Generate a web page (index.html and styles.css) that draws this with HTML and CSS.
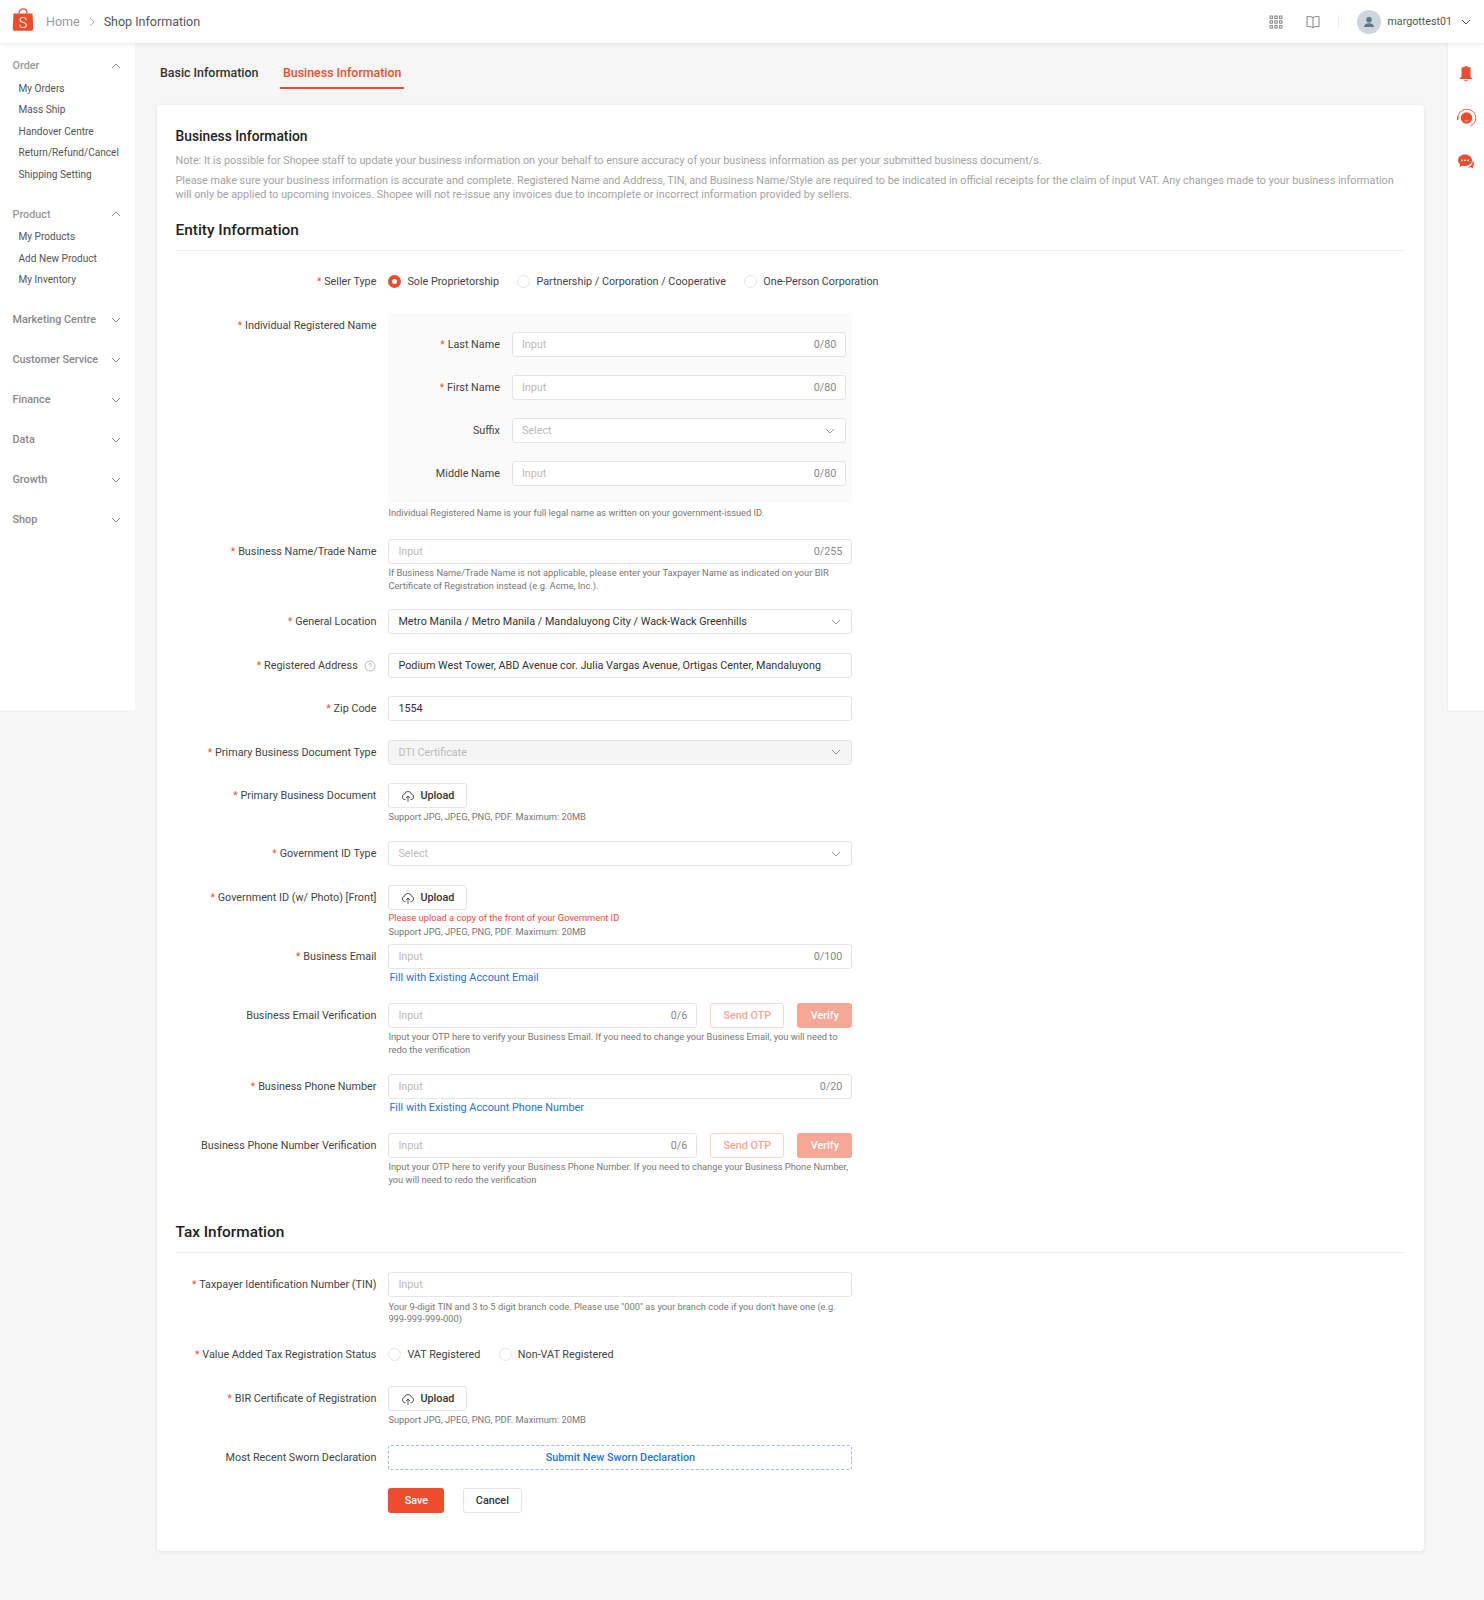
FILE: index.html
```html
<!DOCTYPE html>
<html lang="en">
<head>
<meta charset="utf-8">
<title>Shop Information</title>
<link rel="stylesheet" href="styles.css">
</head>
<body>
<svg class="defs" width="0" height="0" aria-hidden="true">
  <symbol id="down" viewBox="0 0 12 12"><path d="M2 4l4 4 4-4" fill="none" stroke="currentColor" stroke-width="1"/></symbol>
  <symbol id="up" viewBox="0 0 12 12"><path d="M2 8l4-4 4 4" fill="none" stroke="currentColor" stroke-width="1"/></symbol>
  <symbol id="cloud" viewBox="0 0 14 14"><path d="M4.600 10.600H3.800A2.700 2.700 0 0 1 3.400 5.300 3.700 3.700 0 0 1 10.600 5.300 2.700 2.700 0 0 1 10.200 10.600H9.400" fill="none" stroke="currentColor" stroke-width="1"/><path d="M7 12.800V7M5 9l2-2 2 2" fill="none" stroke="currentColor" stroke-width="1"/></symbol>
</svg>

<header class="topbar">
  <svg class="logo" viewBox="0 0 22 24"><path d="M1.500 5.500h19l.8 15.500a1.800 1.800 0 0 1-1.800 1.800H2.500A1.800 1.800 0 0 1 .7 21z" fill="#ee4d2d"/><path d="M7 5.500C7-.6 15-.6 15 5.500" fill="none" stroke="#ee4d2d" stroke-width="1.300"/><text x="11" y="19.500" text-anchor="middle" class="logo-s">S</text></svg>
  <nav class="crumbs">
    <span class="crumb-home">Home</span>
    <svg class="crumb-sep" viewBox="0 0 12 12"><path d="M4 2l4 4-4 4" fill="none" stroke="currentColor"/></svg>
    <span class="crumb-cur">Shop Information</span>
  </nav>
  <div class="top-right">
    <svg class="top-icon" viewBox="0 0 14 14"><g fill="none" stroke="#777" stroke-width=".9"><rect x="1" y="1" width="2.400" height="2.400"/><rect x="5.800" y="1" width="2.400" height="2.400"/><rect x="10.600" y="1" width="2.400" height="2.400"/><rect x="1" y="5.800" width="2.400" height="2.400"/><rect x="5.800" y="5.800" width="2.400" height="2.400"/><rect x="10.600" y="5.800" width="2.400" height="2.400"/><rect x="1" y="10.600" width="2.400" height="2.400"/><rect x="5.800" y="10.600" width="2.400" height="2.400"/><rect x="10.600" y="10.600" width="2.400" height="2.400"/></g></svg>
    <svg class="top-icon book" viewBox="0 0 14 14"><path d="M7 2.500C5.500 1.500 3 1.500 1 1.500V11.500C3 11.500 5.500 11.500 7 12.500 8.500 11.500 11 11.500 13 11.500V1.500C11 1.500 8.500 1.500 7 2.500zM7 2.500V12.500" fill="none" stroke="#777" stroke-width=".9"/></svg>
    <span class="top-sep"></span>
    <svg class="avatar" viewBox="0 0 24 24"><circle cx="12" cy="12" r="12" fill="#ccd6dc"/><circle cx="12" cy="9.800" r="2.800" fill="#5c7a8c"/><path d="M7 17c0-5 10-5 10 0z" fill="#5c7a8c"/></svg>
    <span class="username">margottest01</span>
    <svg class="chev user-chev"><use href="#down"/></svg>
  </div>
</header>

<div class="shell">
  <aside class="sidebar">
    <div class="side-group">
      <div class="side-head"><span>Order</span><svg class="chev"><use href="#up"/></svg></div>
      <a class="side-item">My Orders</a>
      <a class="side-item">Mass Ship</a>
      <a class="side-item">Handover Centre</a>
      <a class="side-item">Return/Refund/Cancel</a>
      <a class="side-item">Shipping Setting</a>
    </div>
    <div class="side-group">
      <div class="side-head"><span>Product</span><svg class="chev"><use href="#up"/></svg></div>
      <a class="side-item">My Products</a>
      <a class="side-item">Add New Product</a>
      <a class="side-item">My Inventory</a>
    </div>
    <div class="side-closed">
      <div class="side-head"><span>Marketing Centre</span><svg class="chev"><use href="#down"/></svg></div>
      <div class="side-head"><span>Customer Service</span><svg class="chev"><use href="#down"/></svg></div>
      <div class="side-head"><span>Finance</span><svg class="chev"><use href="#down"/></svg></div>
      <div class="side-head"><span>Data</span><svg class="chev"><use href="#down"/></svg></div>
      <div class="side-head"><span>Growth</span><svg class="chev"><use href="#down"/></svg></div>
      <div class="side-head"><span>Shop</span><svg class="chev"><use href="#down"/></svg></div>
    </div>
  </aside>

  <main class="main">
    <div class="tabs">
      <a class="tab">Basic Information</a>
      <a class="tab tab-active">Business Information</a>
    </div>

    <section class="card">
      <h2 class="card-title">Business Information</h2>
      <p class="note note-first">Note: It is possible for Shopee staff to update your business information on your behalf to ensure accuracy of your business information as per your submitted business document/s.</p>
      <p class="note note-second">Please make sure your business information is accurate and complete. Registered Name and Address, TIN, and Business Name/Style are required to be indicated in official receipts for the claim of input VAT. Any changes made to your business information will only be applied to upcoming invoices. Shopee will not re-issue any invoices due to incomplete or incorrect information provided by sellers.</p>

      <h3 class="section-title">Entity Information</h3>

      <div class="row mb-19">
        <div class="label req">Seller Type</div>
        <div class="radios">
          <span class="radio radio-on">Sole Proprietorship</span>
          <span class="radio">Partnership / Corporation / Cooperative</span>
          <span class="radio">One-Person Corporation</span>
        </div>
      </div>

      <div class="row mb-19">
        <div class="label req">Individual Registered Name</div>
        <div class="control">
          <div class="name-box">
            <div class="sub-row"><div class="sub-label req">Last Name</div><div class="field"><span class="ph">Input</span><span class="count">0/80</span></div></div>
            <div class="sub-row"><div class="sub-label req">First Name</div><div class="field"><span class="ph">Input</span><span class="count">0/80</span></div></div>
            <div class="sub-row"><div class="sub-label">Suffix</div><div class="field"><span class="ph">Select</span><svg class="chev"><use href="#down"/></svg></div></div>
            <div class="sub-row"><div class="sub-label">Middle Name</div><div class="field"><span class="ph">Input</span><span class="count">0/80</span></div></div>
          </div>
          <p class="hint hint-name">Individual Registered Name is your full legal name as written on your government-issued ID.</p>
        </div>
      </div>

      <div class="row mb-17">
        <div class="label req">Business Name/Trade Name</div>
        <div class="control">
          <div class="field"><span class="ph">Input</span><span class="count">0/255</span></div>
          <p class="hint">If Business Name/Trade Name is not applicable, please enter your Taxpayer Name as indicated on your BIR Certificate of Registration instead (e.g. Acme, Inc.).</p>
        </div>
      </div>

      <div class="row mb-19">
        <div class="label req">General Location</div>
        <div class="control"><div class="field"><span class="val">Metro Manila / Metro Manila / Mandaluyong City / Wack-Wack Greenhills</span><svg class="chev"><use href="#down"/></svg></div></div>
      </div>

      <div class="row mb-18">
        <div class="label req">Registered Address <svg class="help" viewBox="0 0 12 12"><circle cx="6" cy="6" r="5" fill="none" stroke="#aaa" stroke-width=".8"/><path d="M4.700 4.800a1.300 1.300 0 1 1 1.900 1.200c-.4.200-.6.500-.6 1M6 8.200v.8" fill="none" stroke="#aaa" stroke-width=".8"/></svg></div>
        <div class="control"><div class="field"><span class="val">Podium West Tower, ABD Avenue cor. Julia Vargas Avenue, Ortigas Center, Mandaluyong</span></div></div>
      </div>

      <div class="row">
        <div class="label req">Zip Code</div>
        <div class="control"><div class="field"><span class="val">1554</span></div></div>
      </div>

      <div class="row">
        <div class="label req">Primary Business Document Type</div>
        <div class="control"><div class="field field-disabled"><span class="ph">DTI Certificate</span><svg class="chev"><use href="#down"/></svg></div></div>
      </div>

      <div class="row mb-18">
        <div class="label req">Primary Business Document</div>
        <div class="control">
          <button class="upload"><svg class="cloud"><use href="#cloud"/></svg>Upload</button>
          <p class="hint">Support JPG, JPEG, PNG, PDF. Maximum: 20MB</p>
        </div>
      </div>

      <div class="row mb-19">
        <div class="label req">Government ID Type</div>
        <div class="control"><div class="field"><span class="ph">Select</span><svg class="chev"><use href="#down"/></svg></div></div>
      </div>

      <div class="row mb-6">
        <div class="label req">Government ID (w/ Photo) [Front]</div>
        <div class="control">
          <button class="upload"><svg class="cloud"><use href="#cloud"/></svg>Upload</button>
          <p class="hint hint-error">Please upload a copy of the front of your Government ID</p>
          <p class="hint hint-after">Support JPG, JPEG, PNG, PDF. Maximum: 20MB</p>
        </div>
      </div>

      <div class="row">
        <div class="label req">Business Email</div>
        <div class="control">
          <div class="field"><span class="ph">Input</span><span class="count">0/100</span></div>
          <a class="link">Fill with Existing Account Email</a>
        </div>
      </div>

      <div class="row">
        <div class="label">Business Email Verification</div>
        <div class="control">
          <div class="otp">
            <div class="field field-otp"><span class="ph">Input</span><span class="count">0/6</span></div>
            <button class="btn-otp">Send OTP</button>
            <button class="btn-verify">Verify</button>
          </div>
          <p class="hint">Input your OTP here to verify your Business Email. If you need to change your Business Email, you will need to redo the verification</p>
        </div>
      </div>

      <div class="row">
        <div class="label req">Business Phone Number</div>
        <div class="control">
          <div class="field"><span class="ph">Input</span><span class="count">0/20</span></div>
          <a class="link">Fill with Existing Account Phone Number</a>
        </div>
      </div>

      <div class="row mb-0">
        <div class="label">Business Phone Number Verification</div>
        <div class="control">
          <div class="otp">
            <div class="field field-otp"><span class="ph">Input</span><span class="count">0/6</span></div>
            <button class="btn-otp">Send OTP</button>
            <button class="btn-verify">Verify</button>
          </div>
          <p class="hint">Input your OTP here to verify your Business Phone Number. If you need to change your Business Phone Number, you will need to redo the verification</p>
        </div>
      </div>

      <h3 class="section-title section-tax">Tax Information</h3>

      <div class="row mb-16">
        <div class="label req">Taxpayer Identification Number (TIN)</div>
        <div class="control">
          <div class="field"><span class="ph">Input</span></div>
          <p class="hint hint-name">Your 9-digit TIN and 3 to 5 digit branch code. Please use "000" as your branch code if you don't have one (e.g. 999-999-999-000)</p>
        </div>
      </div>

      <div class="row mb-19">
        <div class="label req">Value Added Tax Registration Status</div>
        <div class="radios">
          <span class="radio">VAT Registered</span>
          <span class="radio">Non-VAT Registered</span>
        </div>
      </div>

      <div class="row">
        <div class="label req">BIR Certificate of Registration</div>
        <div class="control">
          <button class="upload"><svg class="cloud"><use href="#cloud"/></svg>Upload</button>
          <p class="hint">Support JPG, JPEG, PNG, PDF. Maximum: 20MB</p>
        </div>
      </div>

      <div class="row">
        <div class="label">Most Recent Sworn Declaration</div>
        <div class="control"><button class="dashed">Submit New Sworn Declaration</button></div>
      </div>

      <div class="actions">
        <button class="btn-save">Save</button>
        <button class="btn-cancel">Cancel</button>
      </div>
    </section>
  </main>

  <aside class="rail">
    <svg class="rail-icon" viewBox="0 0 20 20"><path d="M8.800 2h2.400v1.300h2.300c.6 0 1 .5 1 1v8.500L16.800 15H3.200l2.300-2.200V4.300c0-.5.400-1 1-1h2.300z" fill="#ee4d2d"/><path d="M8 16.200h4c-.4 1.500-3.600 1.500-4 0z" fill="#ee4d2d"/></svg>
    <svg class="rail-icon" viewBox="0 0 20 20"><circle cx="10.500" cy="10" r="5.800" fill="#ee4d2d"/><path d="M1.800 11A8.700 8.700 0 0 1 10.500 1.300M10.500 1.300A8.700 8.700 0 0 1 14.500 18" fill="none" stroke="#ee4d2d" stroke-width=".9"/><path d="M1 8.500h1.300v3.500H1z" fill="#ee4d2d"/><path d="M8.800 12.500c.8.500 2.600.5 3.400 0" fill="none" stroke="#fff" stroke-width=".6"/></svg>
    <svg class="rail-icon" viewBox="0 0 20 20"><path d="M9 2.500c4 0 7 2.600 7 5.800s-3 5.800-7 5.800c-.9 0-1.800-.1-2.600-.4L3.500 15l.6-3C2.800 11 2 9.700 2 8.300c0-3.200 3-5.800 7-5.800z" fill="#ee4d2d"/><path d="M16.800 8.500c.8.900 1.200 1.900 1.200 3 0 1.100-.4 2-1.100 2.800l.4 2.200-2.500-1.200c-1 .3-2 .3-3 .2 2.800-1 4.800-3 5-7z" fill="#ee4d2d"/><circle cx="6" cy="8.300" r=".9" fill="#fff"/><circle cx="9" cy="8.300" r=".9" fill="#fff"/><circle cx="12" cy="8.300" r=".9" fill="#fff"/></svg>
  </aside>
</div>
</body>
</html>
```

FILE: styles.css
```css
* { box-sizing: border-box; }
html, body { margin: 0; padding: 0; }
body {
  background: #f6f6f6;
  font-family: Roboto, "Liberation Sans", sans-serif;
  font-size: 11px;
  color: #333;
  min-height: 1600px;
}
.defs { position: absolute; }
p, h2, h3 { margin: 0; font-weight: 400; }
button { font-family: inherit; cursor: pointer; }

/* top bar */
.topbar {
  height: 43px;
  background: #fff;
  box-shadow: 0 1px 4px rgba(0, 0, 0, .1);
  display: flex;
  align-items: center;
  padding-left: 12px;
  position: relative;
  z-index: 2;
}
.logo { width: 22px; height: 24px; flex: none; margin-top: -3px; }
.logo-s { font-family: Roboto, sans-serif; font-size: 14.500px; font-weight: 300; fill: #fff; }
.crumbs { display: flex; align-items: center; margin-left: 12px; font-size: 12.500px; }
.crumb-home { color: #999; }
.crumb-sep { width: 12px; height: 12px; color: #aaa; margin: 0 6px; }
.crumb-cur { color: #555; }
.top-right { margin-left: auto; display: flex; align-items: center; padding-right: 12px; }
.top-icon { width: 14px; height: 14px; }
.book { margin-left: 23px; }
.top-sep { width: 1px; height: 14px; background: #eee; margin: 0 18px; }
.avatar { width: 24px; height: 24px; }
.username { font-size: 10.700px; color: #555; margin-left: 7px; }
.chev { width: 12px; height: 12px; color: #999; flex: none; }
.user-chev { margin-left: 8px; color: #555; }

/* shell */
.shell { display: flex; align-items: flex-start; }
.sidebar {
  width: 135px;
  height: 667px;
  background: #fff;
  flex: none;
  padding-top: 12.500px;
}
.side-head {
  display: flex;
  justify-content: space-between;
  align-items: center;
  height: 20px;
  padding: 0 13px 0 12.500px;
  color: #999;
  font-size: 10.800px;
  font-weight: 500;
}
.side-head .chev { color: #888; }
.side-group .side-head { margin-bottom: 2px; }
.side-item {
  display: block;
  height: 21.600px;
  line-height: 21.600px;
  padding-left: 18.500px;
  color: #555;
  font-size: 10.100px;
}
.side-group { margin-bottom: 19px; }
.side-group + .side-group { margin-bottom: 19.500px; }
.side-group + .side-group .side-item { height: 21.300px; line-height: 21.300px; }
.side-closed { display: flex; flex-direction: column; gap: 20px; }
.side-closed .side-head { color: #888; }

/* main */
.main { width: 1267px; margin-left: 22px; flex: none; }
.tabs { display: flex; height: 46px; gap: 18.500px; }
.tab {
  height: 46px;
  line-height: 59px;
  padding: 0 3px;
  font-size: 12.400px;
  font-weight: 500;
  color: #333;
}
.tab-active { color: #ee4d2d; border-bottom: 2px solid #ee4d2d; }
.card {
  margin-top: 16px;
  background: #fff;
  border-radius: 4px;
  box-shadow: 0 1px 4px rgba(0, 0, 0, .08);
  padding: 21px 19px 37.500px 18.500px;
}
.card-title { font-size: 13.800px; line-height: 20px; color: #222; font-weight: 500; }
.note { font-size: 10.800px; line-height: 14px; color: #a3a3a3; }
.note-first { margin-top: 8px; }
.note-second { margin-top: 6px; }
.section-title {
  margin-top: 16.500px;
  padding-bottom: 9px;
  margin-bottom: 18px;
  border-bottom: 1px solid #eee;
  font-size: 15.400px;
  line-height: 22px;
  font-weight: 500;
  color: #222;
}
.section-tax { margin-top: 35px; margin-bottom: 19px; }

/* form */
.row { display: flex; gap: 12px; margin-bottom: 18.500px; }
.mb-0 { margin-bottom: 0; }
.mb-6 { margin-bottom: 6px; }
.mb-16 { margin-bottom: 16.500px; }
.mb-17 { margin-bottom: 17.500px; }
.mb-18 { margin-bottom: 18px; }
.mb-19 { margin-bottom: 19px; }
.label, .sub-label {
  flex: none;
  text-align: right;
  line-height: 25px;
  color: #444;
  font-size: 10.800px;
}
.label { width: 200.900px; }
.sub-label { width: 111.500px; }
.req::before { content: "*"; color: #ee4d2d; margin-right: 3px; font-size: 10px; }
.help { width: 12px; height: 12px; vertical-align: -2.500px; margin-left: 4px; }
.control { width: 464px; flex: none; }
.radios { display: flex; align-items: center; height: 25px; gap: 18.400px; }
.radio {
  display: inline-flex;
  align-items: center;
  font-size: 10.800px;
  color: #444;
}
.radio::before {
  content: "";
  box-sizing: border-box;
  width: 13px;
  height: 13px;
  border-radius: 50%;
  border: 1px solid #e5e5e5;
  background: #fff;
  margin-right: 6px;
  flex: none;
}
.radio-on::before { border: 4px solid #ee4d2d; }
.name-box { background: #fafafa; padding: 19px 6px 17px 0; display: flex; flex-direction: column; gap: 18.300px; }
.sub-row { display: flex; gap: 12px; }
.sub-row .field { flex: 1; }
.field {
  height: 25px;
  background: #fff;
  border: 1px solid #e5e5e5;
  border-radius: 3px;
  display: flex;
  align-items: center;
  justify-content: space-between;
  padding: 0 9px;
  font-size: 10.800px;
}
.field-disabled { background: #f5f5f5; }
.ph { color: #bbb; }
.val { color: #333; }
.count { color: #888; }
.hint { font-size: 9.300px; line-height: 13px; color: #777; margin-top: 2px; }
.hint-name { margin-top: 4px; line-height: 12.500px; }
.hint-error { color: #ff4742; margin-top: 1px; }
.hint-after { margin-top: 1px; }
.link { display: block; color: #2673dd; font-size: 10.800px; line-height: 13px; margin-top: 2px; padding-left: 1px; }
.upload {
  width: 79px;
  height: 25px;
  background: #fff;
  border: 1px solid #e5e5e5;
  border-radius: 3px;
  font-size: 10.800px;
  font-weight: 500;
  color: #333;
  display: flex;
  align-items: center;
  justify-content: center;
  gap: 5px;
  padding: 0;
}
.cloud { width: 14px; height: 14px; color: #555; }
.otp { display: flex; gap: 13px; }
.field-otp { width: 309px; flex: none; }
.btn-otp {
  width: 74px;
  height: 25px;
  background: #fff;
  border: 1px solid #fbd4cb;
  border-radius: 3px;
  color: #f6a796;
  font-size: 10.800px;
  font-weight: 500;
  padding: 0;
}
.btn-verify {
  width: 55px;
  height: 25px;
  background: #f6a796;
  border: 0;
  border-radius: 3px;
  color: #fff;
  font-size: 10.800px;
  font-weight: 500;
  padding: 0;
}
.dashed {
  display: block;
  width: 464px;
  height: 25px;
  background: #fff;
  border: 1px dashed #9dbdec;
  border-radius: 3px;
  color: #2673dd;
  font-size: 10.800px;
  font-weight: 500;
  padding: 0;
}
.actions { display: flex; gap: 18.500px; margin-left: 212.900px; }
.btn-save {
  width: 56px;
  height: 25px;
  background: #ee4d2d;
  border: 0;
  border-radius: 3px;
  color: #fff;
  font-size: 10.800px;
  font-weight: 500;
  padding: 0;
}
.btn-cancel {
  width: 59px;
  height: 25px;
  background: #fff;
  border: 1px solid #e5e5e5;
  border-radius: 3px;
  color: #333;
  font-size: 10.800px;
  font-weight: 500;
  padding: 0;
}

/* right rail */
.rail {
  width: 37px;
  height: 667px;
  margin-left: 23px;
  flex: none;
  background: #fff;
  border-left: 1px solid #eee;
  display: flex;
  flex-direction: column;
  align-items: center;
  padding-top: 21px;
  gap: 24px;
}
.rail-icon { width: 20px; height: 20px; }
```
